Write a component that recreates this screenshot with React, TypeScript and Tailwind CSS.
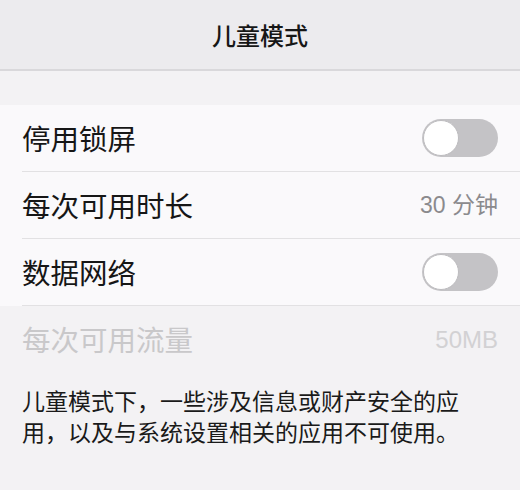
import React from "react";

function Toggle() {
  return (
    <div className="relative h-[38px] w-[76px] rounded-full bg-[#c4c3c6]">
      <div className="absolute left-[1px] top-[1px] h-[36px] w-[36px] rounded-full border border-[#bdbcbf] bg-white" />
    </div>
  );
}

function Row({
  label,
  right,
  divider = true,
  disabled = false,
}: {
  label: string;
  right: React.ReactNode;
  divider?: boolean;
  disabled?: boolean;
}) {
  return (
    <div className={disabled ? "bg-[#f3f2f4] pl-[22px]" : "bg-[#faf9fb] pl-[22px]"}>
      <div
        className={
          "flex h-[67px] items-center justify-between pr-[22px] " +
          (divider ? "border-b border-[#e2e1e3]" : "")
        }
      >
        <span
          className={
            "text-[28.5px] leading-none " + (disabled ? "text-[#c9c8ca]" : "text-[#161616]")
          }
        >
          {label}
        </span>
        {right}
      </div>
    </div>
  );
}

const valueFont = { fontFamily: '"Liberation Sans", "Noto Sans CJK SC", sans-serif' };

export default function App() {
  return (
    <div
      className="flex h-[490px] w-[520px] flex-col bg-[#f3f2f4]"
      style={{ fontFamily: '"Noto Sans CJK SC", "Noto Sans", sans-serif' }}
    >
      <div className="flex h-[71px] items-center justify-center border-b-2 border-[#d9d8db] bg-[#ecebee]">
        <span className="text-[24px] font-medium text-[#161616]">儿童模式</span>
      </div>
      <div className="h-[34px]" />
      <Row label="停用锁屏" right={<Toggle />} />
      <Row
        label="每次可用时长"
        right={
          <span className="text-[23px] text-[#8b8a8d]" style={valueFont}>
            30 分钟
          </span>
        }
      />
      <Row label="数据网络" right={<Toggle />} />
      <Row
        label="每次可用流量"
        disabled
        divider={false}
        right={
          <span className="text-[24px] text-[#d2d1d3]" style={valueFont}>
            50MB
          </span>
        }
      />
      <div className="px-[22px] pt-[12px] text-[23px] leading-[31px] text-[#1a1a1a]">
        儿童模式下，一些涉及信息或财产安全的应用，以及与系统设置相关的应用不可使用。
      </div>
    </div>
  );
}
